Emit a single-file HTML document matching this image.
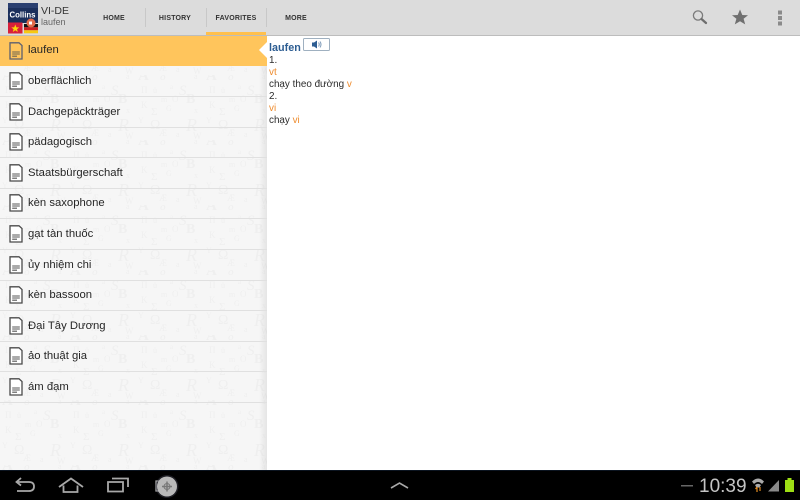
<!DOCTYPE html>
<html><head><meta charset="utf-8"><style>
html,body{margin:0;padding:0;width:800px;height:500px;overflow:hidden;background:#fff;font-family:"Liberation Sans","DejaVu Sans",sans-serif}
.a{position:absolute}
#bar{left:0;top:0;width:800px;height:35px;background:#dcdcdc;border-bottom:1px solid #bdbdbd;box-sizing:content-box}
.tab{position:absolute;top:13.5px;font-size:7px;font-weight:bold;color:#333;letter-spacing:.2px;width:60px;text-align:center;line-height:9px}
.sep{position:absolute;top:8px;width:1px;height:19px;background:#c8c8c8}
.row{position:absolute;left:0;width:267px;height:30px;border-bottom:1px solid #e0e0e0;box-sizing:content-box}
.row span{position:absolute;left:28px;top:8px;font-size:11.3px;line-height:15px;color:#262626;white-space:nowrap}
.row svg{position:absolute;left:9px;top:6px}
#det{left:267px;top:36px;width:533px;height:434px;background:#fff}
.d{position:absolute;left:269px;font-size:9.9px;line-height:12px;color:#2b2b2b;white-space:nowrap}
.o{color:#ee8b2d}
#nav{left:0;top:470px;width:800px;height:30px;background:#000;border-top:1px solid #0b1420;box-sizing:border-box}
</style></head><body>
<div class="a" id="bar"></div>
<svg class="a" style="left:8px;top:3px" width="30" height="31" viewBox="0 0 30 31">
<rect width="30" height="20" fill="#1b2f5c"/><rect y="0" width="30" height="5" fill="#2a3f70"/>
<rect y="19.500" width="14.500" height="11" fill="#d8203a"/><polygon points="7.300,21.500 8.400,24.400 11.300,24.400 9,26.200 9.800,29 7.300,27.300 4.800,29 5.600,26.200 3.300,24.400 6.200,24.400" fill="#fbd70b"/>
<rect x="16" y="21" width="14" height="3.300" fill="#111"/><rect x="16" y="24.300" width="14" height="3" fill="#cf2020"/><rect x="16" y="27.300" width="14" height="3" fill="#f6c913"/>
<text x="1.500" y="14.500" font-family="Liberation Sans" font-weight="bold" font-size="7.800" fill="#fff">Collins</text>
<circle cx="23" cy="20" r="4.500" fill="#e36a4a"/><rect x="21" y="18.500" width="3" height="3" fill="#fff"/>
</svg>
<div class="a" style="left:41px;top:4.500px;font-size:10.5px;line-height:13px;color:#333">VI-DE</div>
<div class="a" style="left:41px;top:16px;font-size:9px;line-height:12px;color:#666">laufen</div>
<div class="tab" style="left:84px">HOME</div>
<div class="tab" style="left:145px">HISTORY</div>
<div class="tab" style="left:206px">FAVORITES</div>
<div class="tab" style="left:266px">MORE</div>
<div class="sep" style="left:145px"></div><div class="sep" style="left:206px"></div><div class="sep" style="left:266px"></div>
<div class="a" style="left:206px;top:32px;width:60px;height:3px;background:#ffc04d"></div>
<svg class="a" style="left:690px;top:8px" width="100" height="20" viewBox="0 0 100 20">
<circle cx="8" cy="7.500" r="4.600" fill="none" stroke="#7b7b7b" stroke-width="1.300"/><path d="M11.500 11L16 15" stroke="#6e6e6e" stroke-width="2.200" stroke-linecap="round"/>
<polygon points="50,1.500 52.300,7 58,7.200 53.600,10.800 55.200,16.400 50,13.200 44.800,16.400 46.400,10.800 42,7.200 47.700,7" fill="#707070"/>
<rect x="88" y="2.500" width="4" height="4" fill="#8a8a8a"/><rect x="88" y="8" width="4" height="4" fill="#8a8a8a"/><rect x="88" y="13.500" width="4" height="4" fill="#8a8a8a"/>
</svg>

<svg class="a" style="left:0;top:36px" width="267" height="434" viewBox="0 36 267 434">
<defs><pattern id="p" x="0" y="75" width="68" height="65" patternUnits="userSpaceOnUse">
<g fill="#efefef" font-family="Liberation Serif">
<text x="2" y="5" font-size="15" font-weight="bold">A</text><text x="24" y="5" font-size="12" font-style="italic">δ</text><text x="58" y="4" font-size="8">a</text>
<text x="43" y="20" font-size="15" font-style="italic">S</text><text x="5" y="18" font-size="9">Π</text><text x="17" y="18" font-size="8">ü</text><text x="34" y="14" font-size="7">a</text>
<text x="50" y="28" font-size="14" font-weight="bold">B</text><text x="25" y="27" font-size="8">m</text><text x="36" y="27" font-size="9">O</text>
<text x="5" y="33" font-size="9">K</text><text x="15" y="40" font-size="11">Σ</text><text x="30" y="36" font-size="8">G</text><text x="58" y="38" font-size="8">x</text>
<text x="14" y="54" font-size="14">Ω</text><text x="50" y="56" font-size="18" font-style="italic">R</text><text x="2" y="48" font-size="8">Y</text>
<text x="23" y="61" font-size="9">Æ</text><text x="40" y="62" font-size="8">a</text><text x="57" y="64" font-size="9">W</text>
</g></pattern></defs>
<rect x="0" y="36" width="267" height="434" fill="#f6f6f6"/>
<rect x="0" y="36" width="267" height="434" fill="url(#p)"/>
</svg>
<div class="a" style="left:259px;top:36px;width:8px;height:434px;background:linear-gradient(90deg,rgba(0,0,0,0),rgba(0,0,0,.07))"></div>

<div class="a" style="left:0;top:36px;width:267px;height:30px;background:#ffc55c"></div>
<svg width="0" height="0" style="position:absolute"><defs><g id="doc"><path d="M1 .8H10L13 3.500V17H1Z" fill="#fff" stroke="#4a4a4a" stroke-width="1.300"/><path d="M3.200 10H10.800M3.200 12H10.800M3.200 14.200H8" stroke="#555" stroke-width="1.100"/></g></defs></svg>
<div id="rows">
<div class="row" style="top:36px;border:0"><svg width="14" height="18"><g><path d="M1 .8H10L13 3.500V17H1Z" fill="#ffc55c" stroke="#5c6070" stroke-width="1.300"/><path d="M3.200 10H10.800M3.200 12H10.800M3.200 14.200H8" stroke="#6a6250" stroke-width="1.100"/></g></svg><span style="top:7px">laufen</span></div>
<div class="row" style="top:66px"><svg width="14" height="18"><use href="#doc"/></svg><span>oberflächlich</span></div>
<div class="row" style="top:96.600px"><svg width="14" height="18"><use href="#doc"/></svg><span>Dachgepäckträger</span></div>
<div class="row" style="top:127.200px"><svg width="14" height="18"><use href="#doc"/></svg><span>pädagogisch</span></div>
<div class="row" style="top:157.800px"><svg width="14" height="18"><use href="#doc"/></svg><span>Staatsbürgerschaft</span></div>
<div class="row" style="top:188.400px"><svg width="14" height="18"><use href="#doc"/></svg><span>kèn saxophone</span></div>
<div class="row" style="top:219px"><svg width="14" height="18"><use href="#doc"/></svg><span>gạt tàn thuốc</span></div>
<div class="row" style="top:249.600px"><svg width="14" height="18"><use href="#doc"/></svg><span>ủy nhiệm chi</span></div>
<div class="row" style="top:280.200px"><svg width="14" height="18"><use href="#doc"/></svg><span>kèn bassoon</span></div>
<div class="row" style="top:310.800px"><svg width="14" height="18"><use href="#doc"/></svg><span>Đại Tây Dương</span></div>
<div class="row" style="top:341.400px"><svg width="14" height="18"><use href="#doc"/></svg><span>ảo thuật gia</span></div>
<div class="row" style="top:372px"><svg width="14" height="18"><use href="#doc"/></svg><span>ám đạm</span></div>
</div>

<div class="a" id="det"></div>
<svg class="a" style="left:258px;top:40px" width="10" height="20"><polygon points="9,2 1,10 9,18" fill="#fff"/></svg>
<div class="d" style="top:41.500px;font-size:10.800px;line-height:13px;font-weight:bold;color:#2d5d92">laufen</div>
<svg class="a" style="left:303px;top:38px" width="27" height="13"><rect x=".5" y=".5" width="26" height="12" rx="1" fill="#fff" stroke="#9fb0c0"/><rect x="9" y="4.500" width="2.500" height="4" fill="#2d5d92"/><polygon points="11,4.500 14,2.500 14,10.500 11,8.500" fill="#2d5d92"/><path d="M15.500 4.500Q17 6.500 15.500 8.500M17 3.500Q19 6.500 17 9.500" stroke="#7d9ab8" fill="none"/></svg>
<div class="d" style="top:55px">1.</div>
<div class="d o" style="top:67px">vt</div>
<div class="d" style="top:79px">chạy theo đường <span class="o">v</span></div>
<div class="d" style="top:91px">2.</div>
<div class="d o" style="top:103px">vi</div>
<div class="d" style="top:115px">chạy <span class="o">vi</span></div>

<div class="a" id="nav"></div>
<svg class="a" style="left:0;top:470px" width="800" height="30" viewBox="0 0 800 30">
<g fill="none" stroke="#a8a8a8" stroke-width="1.800">
<path d="M17 12H29Q34 12 34 16.500Q34 21 29 21H17"/><path d="M21 8L16.500 12L21 15.500"/>
<path d="M59 17L71 8.500L83 17M63.500 15.500V22H77.500V15.500"/>
<path d="M108 12H123V21.500H108Z"/><path d="M112 8.500H128V17"/>
<path d="M156 11H171V21H156Z" stroke-width="1.300"/>
<path d="M391 18L399.500 13L408 18" stroke-width="1.600"/>
</g>
<circle cx="167" cy="16.500" r="11.500" fill="#556" opacity=".35"/><circle cx="167" cy="16.500" r="10" fill="#b9b9b9"/>
<path d="M162 16.500H172M167 11.500V21.500" stroke="#777" stroke-width="1.500"/><circle cx="167" cy="16.500" r="3" fill="none" stroke="#777"/>
<rect x="681" y="15" width="12" height="1.500" fill="#666"/>
<text x="699" y="22" font-family="Liberation Sans" font-size="19" fill="#c4c4c4">10:39</text>
<path d="M752 11.500Q758 5.500 764 11.500L762 14Q758 10 754 14ZM755 15Q758 12.500 761 15L759.500 17.500H756.500Z" fill="#aaa"/>
<path d="M757 17V22M755.500 19L757 17M760 21V17" stroke="#e08a20" stroke-width="1.200" fill="none"/>
<polygon points="768,21.500 779,10 779,21.500" fill="#8a8a8a"/>
<rect x="785" y="10" width="9" height="12" fill="#9dde14"/><rect x="787.500" y="8" width="4" height="2.500" fill="#9dde14"/>
</svg>
</body></html>
